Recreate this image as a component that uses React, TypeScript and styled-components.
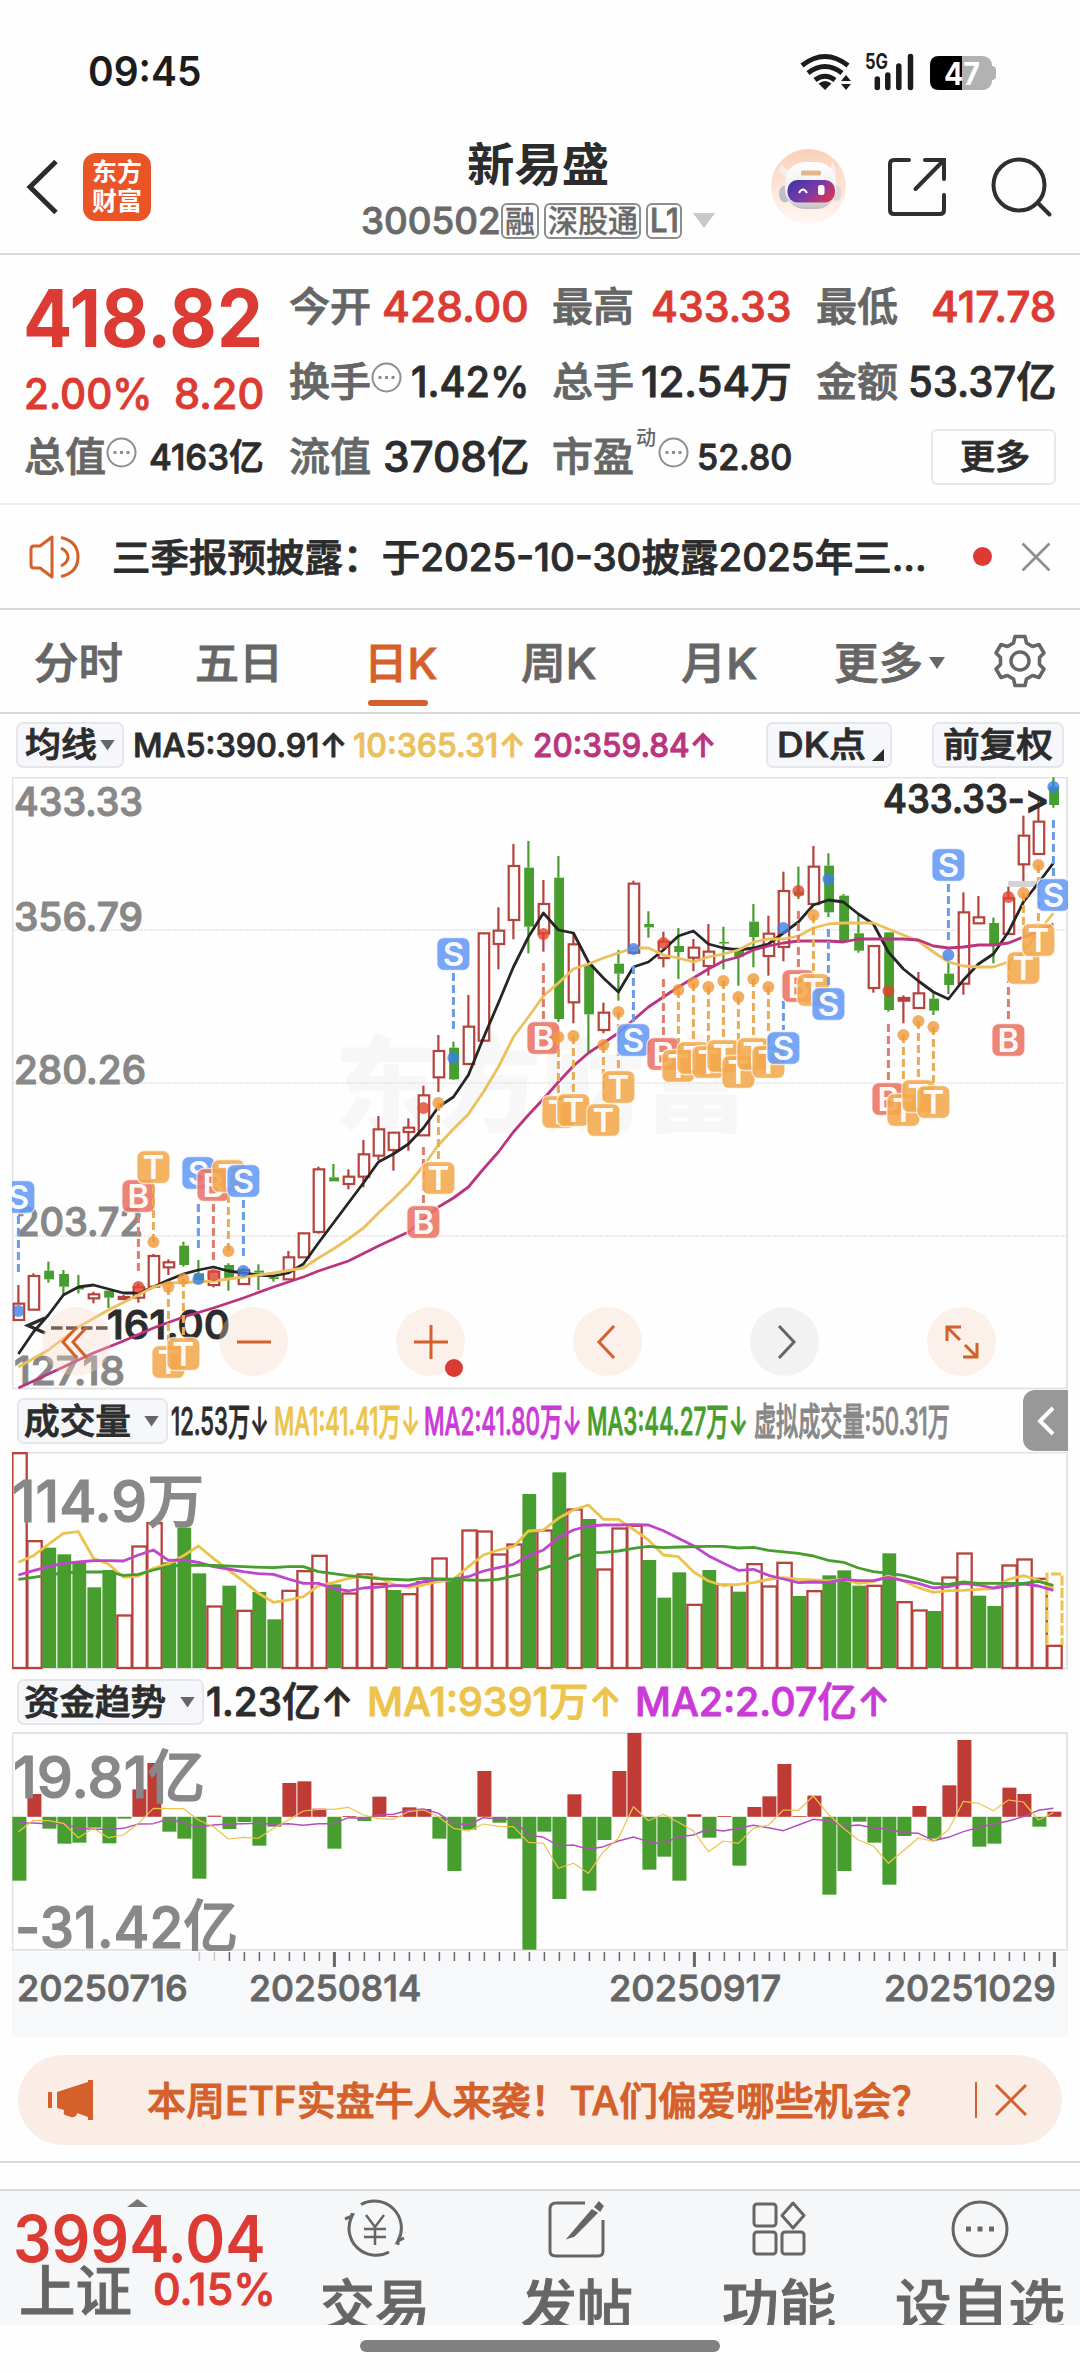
import React, { useLayoutEffect, useRef, useState } from "react";
import styled, { createGlobalStyle } from "styled-components";

const FONT = `Inter, "Noto Sans CJK SC", sans-serif`;
const RED = "#dc3b33";
const ORANGE = "#d4602b";
const CANDLE_RED = "#b5433c";
const CANDLE_GREEN = "#479d2d";
const YELLOW = "#ecc34b";
const PURPLE = "#c93ad6";

const GlobalStyle = createGlobalStyle`
  * { box-sizing: border-box; }
  body { margin: 0; background: #fefefe; }
`;

const Page = styled.div`
  width: 1080px;
  height: 2373px;
  display: flex;
  flex-direction: column;
  overflow: hidden;
  background: #fefefe;
  color: #2c2c2c;
  font-family: ${FONT};
  line-height: 1;
`;

/* ---------- auto-fit text ---------- */

interface TextStyle {
  $size: number;
  $weight?: number;
  $color?: string;
  $ml?: number;
}

const FitBox = styled.span<TextStyle & { $width: number }>`
  display: block;
  flex: none;
  width: ${(p) => p.$width}px;
  height: ${(p) => p.$size}px;
  margin-left: ${(p) => p.$ml ?? 0}px;
  font-size: ${(p) => p.$size}px;
  font-weight: ${(p) => p.$weight ?? 500};
  color: ${(p) => p.$color ?? "inherit"};
  -webkit-text-stroke: ${(p) => (p.$weight ? 0 : p.$size > 32 ? 0.9 : 0.3)}px currentColor;
  line-height: 1;
  white-space: nowrap;
`;

const FitInner = styled.span`
  display: inline-block;
  transform-origin: 0 50%;
`;

interface FitProps {
  children: string;
  width: number;
  size: number;
  weight?: number;
  color?: string;
  ml?: number;
}

// squeezes or stretches one line of text so it fills the given width
const Fit = ({ children, width, size, weight, color, ml }: FitProps) => {
  const ref = useRef<HTMLSpanElement>(null);
  const [scale, setScale] = useState(1);
  useLayoutEffect(() => {
    if (ref.current) setScale(width / ref.current.offsetWidth);
  }, [children, width]);
  return (
    <FitBox $width={width} $size={size} $weight={weight} $color={color} $ml={ml}>
      <FitInner ref={ref} style={{ transform: `scaleX(${scale})` }}>
        {children}
      </FitInner>
    </FitBox>
  );
};

const Triangle = styled.i<{ $w: number; $h: number; $color?: string; $up?: boolean; $ml?: number }>`
  flex: none;
  width: ${(p) => p.$w}px;
  height: ${(p) => p.$h}px;
  margin-left: ${(p) => p.$ml ?? 0}px;
  background: ${(p) => p.$color ?? "#666"};
  clip-path: ${(p) => (p.$up ? "polygon(50% 0, 100% 100%, 0 100%)" : "polygon(0 0, 100% 0, 50% 100%)")};
`;

/* ---------- status bar ---------- */

const StatusBar = styled.div`
  height: 120px;
  padding: 51px 84px 0 88px;
  display: flex;
  align-items: flex-start;
  justify-content: space-between;
  color: #1c1c1c;
`;

const StatusIcons = styled.div`
  display: flex;
  margin-top: 2px;
`;

const StatusIconsSvg = () => (
  <svg width="198" height="40" viewBox="798 53 198 40">
    <g fill="none" stroke="#1c1c1c" strokeWidth="5">
      <path d="M802 65.500 Q825 47.500 848 65.500" />
      <path d="M808 73 Q825 60 842 73" />
      <path d="M815 80 Q825 72.500 835 80" />
    </g>
    <path d="M825 90l-6.500-6.500q6.500-5 13 0z" fill="#1c1c1c" />
    <path d="M846 75l5 6h-10zM846 90l5-6h-10z" fill="#1c1c1c" />
    <text x="865" y="69" fontSize="21" fontWeight="700" fill="#1c1c1c" fontFamily={FONT} textLength="23" lengthAdjust="spacingAndGlyphs">5G</text>
    <path d="M877.300 79v8.500M887.800 75v12.500M898.800 66v21.500M910.500 56.500v31" stroke="#1c1c1c" strokeWidth="5.500" strokeLinecap="round" />
    <rect x="930" y="56" width="62" height="34" rx="9" fill="#b2b2b2" />
    <path d="M992 66q4 0 4 4v6q0 4-4 4z" fill="#b2b2b2" />
    <path d="M962 56v34h-23q-9 0-9-9v-16q0-9 9-9z" fill="#000" />
    <text x="944" y="84.500" fontSize="31" fontWeight="700" fill="#fff" fontFamily={FONT} textLength="36" lengthAdjust="spacingAndGlyphs">47</text>
  </svg>
);

/* ---------- header ---------- */

const Header = styled.header`
  height: 135px;
  display: grid;
  grid-template-columns: 361px 354px 1fr;
  border-bottom: 2px solid #dadada;
`;

const HeaderLeft = styled.div`
  display: flex;
  align-items: center;
  padding-left: 26px;
  gap: 24px;
`;

const Logo = styled.div`
  width: 68px;
  height: 68px;
  border-radius: 13px;
  background: #ea5528;
  color: #fff;
  display: flex;
  flex-direction: column;
  align-items: center;
  justify-content: center;
  gap: 4px;
  font-size: 25px;
  font-weight: 700;
`;

const HeaderTitle = styled.div`
  display: flex;
  flex-direction: column;
  align-items: center;
  padding-top: 21px;
`;

const SubTitle = styled.div`
  display: flex;
  align-items: center;
  width: 354px;
  height: 37px;
  margin-top: 15px;
  color: #6a6a6a;
`;

const Tag = styled.span<{ $w: number }>`
  width: ${(p) => p.$w}px;
  height: 36px;
  margin-right: 5px;
  display: flex;
  align-items: center;
  justify-content: center;
  border: 2px solid #8d8d8d;
  border-radius: 6px;
`;

const HeaderRight = styled.div`
  display: flex;
  align-items: center;
  padding-left: 56px;
`;

const Avatar = () => (
  <svg width="75" height="75" viewBox="0 0 75 75">
    <defs>
      <linearGradient id="halo" x1="0" y1="0" x2="0" y2="1">
        <stop offset="0" stopColor="#fbd0b8" />
        <stop offset="1" stopColor="#fff8f4" />
      </linearGradient>
      <linearGradient id="visor" x1="0" y1="0" x2="1" y2="0.6">
        <stop offset="0" stopColor="#3a32a5" />
        <stop offset="0.6" stopColor="#7a3ba8" />
        <stop offset="1" stopColor="#d0365a" />
      </linearGradient>
      <linearGradient id="helmet" x1="0" y1="0" x2="0" y2="1">
        <stop offset="0" stopColor="#fff" />
        <stop offset="0.7" stopColor="#ececee" />
        <stop offset="1" stopColor="#bdbdc4" />
      </linearGradient>
    </defs>
    <circle cx="37.500" cy="37.500" r="37.500" fill="url(#halo)" />
    <path d="M18 28q-9-1-10-7 1-4 3-6 1 6 10 6zM58 25l3-12q4 5 4 12l-2 6z" fill="#f3eeee" />
    <ellipse cx="14" cy="45" rx="6" ry="8.500" fill="#bfbfc8" />
    <ellipse cx="66" cy="44" rx="4.500" ry="8" fill="#dcd8de" />
    <rect x="14" y="13" width="51" height="47" rx="20" fill="url(#helmet)" />
    <rect x="30" y="21.500" width="20" height="5" rx="1.500" fill="#e3b58d" />
    <rect x="16.500" y="31" width="47.500" height="22.500" rx="10" fill="url(#visor)" />
    <path d="M28 44q4-7 8 0" fill="none" stroke="#fff" strokeWidth="2" />
    <rect x="47" y="36" width="6.500" height="10" rx="2.500" fill="#fff" />
  </svg>
);

const HeaderIcon = styled.svg<{ $ml: number }>`
  flex: none;
  margin-left: ${(p) => p.$ml}px;
  fill: none;
  stroke: #2f2f2f;
  stroke-width: 4;
  stroke-linecap: round;
`;

/* ---------- quote ---------- */

const Quote = styled.section`
  height: 250px;
  padding: 14px 23px 11px 23px;
  display: grid;
  grid-template-columns: 265px 263px 264px 1fr;
  grid-template-rows: 75px 75px 75px;
  border-bottom: 2px solid #ebedee;
`;

const PriceBlock = styled.div`
  grid-row: span 2;
  padding-top: 9px;
`;

const ChangeRow = styled.div`
  display: flex;
  margin-top: 15px;
`;

const Cell = styled.div<{ $w: number }>`
  width: ${(p) => p.$w}px;
  display: flex;
  align-items: center;
  justify-content: space-between;
`;

const LabelGroup = styled.div`
  display: flex;
  align-items: center;
  color: #666;
`;

const Sup = styled.span`
  width: 22px;
  margin: -38px 0 0 2px;
  font-size: 20px;
  font-weight: 500;
`;

const MoreButton = styled.button`
  width: 125px;
  height: 56px;
  margin-left: 116px;
  align-self: center;
  display: flex;
  align-items: center;
  justify-content: center;
  border: 2px solid #e6e8ea;
  border-radius: 6px;
  background: #fefefe;
  color: #2c2c2c;
  font-family: inherit;
  padding: 0;
`;

const DotsSvg = styled.svg`
  margin-top: -8px;
  fill: none;
  stroke: #8e8e8e;
`;

const InfoDots = () => (
  <DotsSvg width="31" height="31" viewBox="0 0 31 31">
    <circle cx="15.500" cy="15.500" r="14" strokeWidth="2" />
    <path d="M7.500 15.500h3M14 15.500h3M20.500 15.500h3" strokeWidth="3" />
  </DotsSvg>
);

interface StatProps {
  label: string;
  value: string;
  valueWidth: number;
  info?: boolean;
  sup?: string;
  color?: string;
  small?: boolean;
}

const Stat = ({ label, value, valueWidth, info, sup, color, small }: StatProps) => (
  <Cell $w={241}>
    <LabelGroup>
      <Fit width={82} size={40} color="#666" ml={1}>{label}</Fit>
      {sup && <Sup>{sup}</Sup>}
      {info && <InfoDots />}
    </LabelGroup>
    <Fit width={valueWidth} size={small ? 36 : 42} color={color}>{value}</Fit>
  </Cell>
);

/* ---------- news ---------- */

const News = styled.section`
  height: 105px;
  padding-left: 28px;
  display: flex;
  align-items: center;
  border-bottom: 2px solid #d8d8d8;
`;

const RedDot = styled.i`
  width: 19px;
  height: 19px;
  margin: 0 28px 0 46px;
  border-radius: 50%;
  background: ${RED};
`;

/* ---------- tabs ---------- */

const Tabs = styled.nav`
  height: 104px;
  display: flex;
  align-items: center;
  border-bottom: 2px solid #d8d8d8;
  color: #666;
`;

const Tab = styled.div<{ $ml: number; $active?: boolean }>`
  height: 102px;
  margin-left: ${(p) => p.$ml}px;
  display: flex;
  align-items: center;
  padding-top: 4px;
  position: relative;
  color: ${(p) => (p.$active ? ORANGE : "#666")};

  &::after {
    content: "";
    display: ${(p) => (p.$active ? "block" : "none")};
    position: absolute;
    left: 4px;
    bottom: 6px;
    width: 60px;
    height: 6px;
    border-radius: 3px;
    background: ${ORANGE};
  }
`;

const GearSvg = styled.svg`
  margin-left: 48px;
  fill: none;
  stroke: #666;
  stroke-width: 3.5;
  stroke-linejoin: round;
`;

/* ---------- indicator bars ---------- */

const IndicatorBar = styled.div<{ $h: number; $pad: number }>`
  height: ${(p) => p.$h}px;
  padding: ${(p) => p.$pad}px 12px 0 16px;
  display: flex;
  align-items: flex-start;
`;

const BarTexts = styled.div`
  height: 46px;
  display: flex;
  align-items: center;
`;

const Chip = styled.div<{ $w: number; $ml?: number }>`
  position: relative;
  flex: none;
  width: ${(p) => p.$w}px;
  height: 46px;
  margin-left: ${(p) => p.$ml ?? 0}px;
  display: flex;
  align-items: center;
  padding-left: 5px;
  background: #f6f7fa;
  border: 2px solid #e4e6ea;
  border-radius: 7px;
`;

const Corner = styled.i`
  position: absolute;
  right: 6px;
  bottom: 5px;
  width: 12px;
  height: 12px;
  background: #2c2c2c;
  clip-path: polygon(100% 0, 100% 100%, 0 100%);
`;

const SideHandle = styled.div`
  width: 45px;
  height: 61px;
  margin: -8px 0 0 auto;
  border-radius: 12px 0 0 12px;
  background: #989898;
  display: flex;
  align-items: center;
  justify-content: center;
`;

/* ---------- charts ---------- */

const ChartWrap = styled.div`
  position: relative;
  width: 1056px;
  margin-left: 12px;

  svg {
    display: block;
  }
`;

const ChartTools = styled.div`
  position: absolute;
  left: 30px;
  right: 38px;
  bottom: 14px;
  display: flex;
  gap: 109px;
`;

const ToolButton = styled.button<{ $muted?: boolean }>`
  position: relative;
  width: 69px;
  height: 69px;
  margin-right: -1px;
  flex: none;
  padding: 0;
  border: 0;
  border-radius: 50%;
  background: ${(p) => (p.$muted ? "rgba(225, 225, 225, 0.4)" : "rgba(245, 215, 195, 0.33)")};
  color: ${(p) => (p.$muted ? "#666" : ORANGE)};
  display: flex;
  align-items: center;
  justify-content: center;

  svg {
    fill: none;
    stroke: currentColor;
    stroke-width: 3;
  }
`;

const ToolDot = styled.i`
  position: absolute;
  left: 49px;
  top: 52px;
  width: 18px;
  height: 18px;
  border-radius: 50%;
  background: ${RED};
`;

const barX = (i: number) => 18.4 + 15 * i;

// [index, value] pairs, y in thirds of a pixel
type Series = number[][];

const toPoints = (series: Series, base: number) =>
  series.map(([i, v]) => `${barX(i)},${(base + v / 3).toFixed(1)}`).join(" ");

const dense = (values: number[]): Series => values.map((v, i) => [i, v]);

// direction, high, body top, body bottom, low
const candles: [string, number, number, number, number][] = [
  ["r", 1545, 1601, 1650, 1650], ["r", 1510, 1518, 1619, 1619], ["g", 1475, 1502, 1528, 1538], ["g", 1500, 1512, 1550, 1572],
  ["g", 1515, 1554, 1558, 1570], ["r", 1565, 1573, 1585, 1600], ["g", 1562, 1562, 1583, 1614], ["r", 1575, 1581, 1587, 1588],
  ["r", 1540, 1552, 1583, 1598], ["r", 1452, 1458, 1550, 1550], ["r", 1468, 1477, 1492, 1515], ["g", 1415, 1427, 1485, 1490],
  ["g", 1470, 1510, 1530, 1542], ["r", 1505, 1505, 1545, 1552], ["g", 1480, 1485, 1527, 1562], ["r", 1495, 1500, 1542, 1542],
  ["g", 1483, 1502, 1508, 1560], ["g", 1518, 1522, 1527, 1535], ["r", 1443, 1462, 1528, 1528], ["r", 1388, 1390, 1462, 1462],
  ["r", 1190, 1198, 1386, 1391], ["g", 1182, 1222, 1234, 1234], ["r", 1198, 1220, 1242, 1258], ["r", 1110, 1153, 1220, 1252],
  ["r", 1038, 1078, 1157, 1170], ["r", 1088, 1088, 1140, 1202], ["r", 1045, 1073, 1086, 1142], ["r", 947, 976, 1096, 1096],
  ["r", 795, 843, 922, 966], ["g", 815, 833, 928, 930], ["r", 675, 770, 882, 882], ["r", 488, 490, 812, 812],
  ["r", 412, 482, 522, 598], ["r", 222, 288, 450, 508], ["g", 213, 293, 470, 550], ["r", 330, 402, 490, 545],
  ["g", 258, 323, 747, 755], ["r", 490, 523, 697, 760], ["g", 580, 585, 733, 850], ["r", 698, 728, 780, 790],
  ["g", 540, 581, 611, 692], ["r", 332, 341, 548, 548], ["g", 424, 462, 472, 503], ["r", 485, 515, 564, 592],
  ["g", 474, 528, 546, 627], ["r", 507, 533, 563, 604], ["r", 462, 545, 588, 617], ["g", 470, 516, 520, 598],
  ["g", 533, 533, 560, 647], ["g", 402, 455, 501, 592], ["r", 437, 491, 558, 617], ["r", 305, 363, 531, 574],
  ["g", 290, 365, 376, 387], ["r", 228, 290, 402, 402], ["g", 250, 287, 427, 441], ["g", 372, 377, 514, 514],
  ["g", 430, 490, 542, 548], ["r", 528, 528, 654, 668], ["g", 487, 487, 720, 725], ["r", 676, 684, 692, 760],
  ["r", 606, 670, 714, 714], ["g", 665, 686, 722, 735], ["g", 575, 611, 645, 672], ["r", 367, 427, 641, 674],
  ["r", 378, 442, 460, 460], ["g", 443, 459, 523, 580], ["r", 350, 385, 492, 492], ["r", 137, 197, 283, 335],
  ["r", 80, 155, 252, 252], ["g", 22, 50, 105, 113],
];

const ma5 = [
  1354, 1332, 1315, 1295, 1287, 1285, 1289, 1293, 1293, 1287, 1280, 1274, 1270, 1267, 1271, 1273, 1275, 1276, 1273, 1264, 1243, 1223,
  1203, 1183, 1162, 1154, 1144, 1128, 1107, 1097, 1075, 1038, 1003, 967, 937, 913, 930, 933, 962, 978, 992, 967, 962, 950, 936, 931, 944,
  948, 950, 948, 944, 933, 922, 905, 900, 902, 914, 924, 952, 969, 981, 992, 999, 980, 964, 954, 932, 902, 883, 863,
].map((y, i) => [i, y * 3]);

const ma10 = [
  [0, 1367], [2, 1350], [4, 1327], [6, 1310], [8, 1295], [9, 1287], [10, 1283], [12, 1282], [13, 1281], [15, 1277], [17, 1273], [19, 1268],
  [20, 1258], [21, 1249], [22, 1239], [23, 1228], [24, 1213], [25, 1199], [26, 1184], [27, 1166], [28, 1145], [29, 1129], [30, 1114],
  [31, 1092], [32, 1067], [33, 1037], [34, 1017], [35, 996], [36, 983], [37, 969], [38, 964], [39, 958], [40, 953], [41, 948], [42, 948],
  [43, 955], [44, 958], [45, 962], [46, 957], [47, 954], [48, 950], [49, 942], [50, 939], [51, 939], [52, 936], [53, 928], [54, 924],
  [55, 923], [57, 923], [58, 929], [59, 935], [60, 941], [61, 952], [62, 962], [63, 966], [64, 967], [65, 967], [66, 962], [67, 952],
  [68, 932], [69, 913],
].map(([i, y]) => [i, y * 3]);

const ma20 = [
  [0, 1388], [3, 1367], [5, 1353], [7, 1341], [9, 1328], [11, 1317], [13, 1308], [15, 1298], [17, 1287], [19, 1277], [20, 1271], [22, 1261],
  [24, 1246], [26, 1232], [28, 1207], [29, 1198], [30, 1187], [31, 1169], [32, 1152], [33, 1132], [34, 1115], [35, 1099], [36, 1082],
  [37, 1066], [38, 1053], [39, 1043], [40, 1033], [41, 1020], [42, 1007], [43, 997], [44, 987], [45, 978], [46, 969], [47, 961], [48, 957],
  [49, 950], [50, 946], [51, 943], [52, 941], [54, 941], [55, 942], [56, 939], [59, 939], [60, 940], [61, 946], [62, 948], [63, 947],
  [64, 945], [65, 945], [66, 943], [67, 937], [68, 932], [69, 924],
].map(([i, y]) => [i, y * 3]);

// kind, bar index, badge centre y, dot y, line start, line end
const markers: [string, number, number, number, number, number][] = [
  ["S", 0, 1197, 1311, 1216, 1272], ["B", 8, 1196, 1287, 1215, 1271], ["T", 9, 1167, 1242, 1186, 1242], ["T", 10, 1362, 1287, 1287, 1345],
  ["T", 11, 1354, 1279, 1279, 1337], ["S", 12, 1173, 1279, 1204, 1248], ["B", 13, 1185, 1275, 1204, 1260], ["T", 14, 1176, 1251, 1195, 1251],
  ["S", 15, 1181, 1271, 1200, 1256], ["B", 27, 1222, 1108, 1147, 1204], ["T", 28, 1178, 1103, 1103, 1160], ["S", 29, 954, 1058, 973, 1029],
  ["B", 35, 1038, 934, 963, 1020], ["T", 36, 1112, 1037, 1037, 1095], ["T", 37, 1110, 1036, 1036, 1093], ["T", 39, 1120, 1045, 1045, 1103],
  ["T", 40, 1087, 1012, 1012, 1070], ["S", 41, 1040, 949, 966, 1022], ["B", 43, 1054, 943, 979, 1036], ["T", 44, 1066, 990, 990, 1048],
  ["T", 45, 1058, 983, 983, 1040], ["T", 46, 1062, 987, 987, 1044], ["T", 47, 1056, 981, 981, 1038], ["T", 48, 1072, 997, 997, 1055],
  ["T", 49, 1054, 979, 979, 1036], ["T", 50, 1062, 987, 987, 1044], ["S", 51, 1048, 928, 1001, 1030], ["B", 52, 986, 891, 911, 968],
  ["T", 53, 990, 915, 915, 972], ["S", 54, 1004, 879, 929, 986], ["B", 58, 1099, 991, 1024, 1081], ["T", 59, 1110, 1035, 1035, 1092],
  ["T", 60, 1096, 1021, 1021, 1078], ["T", 61, 1102, 1027, 1027, 1084], ["S", 62, 865, 955, 884, 941], ["B", 66, 1040, 897, 963, 1022],
  ["T", 67, 968, 893, 893, 950], ["T", 68, 940, 865, 865, 922], ["S", 69, 895, 787, 820, 877],
];

const badgeColors: Record<string, { fill: string; line: string; dot: string }> = {
  S: { fill: "#659af6", line: "#6a9be8", dot: "#3d7fe6" },
  B: { fill: "#ea7464", line: "#e07c6c", dot: "#e0452e" },
  T: { fill: "#f2a94c", line: "#e8ab57", dot: "#f0993a" },
};

const Badge = ({ kind, x, y }: { kind: string; x: number; y: number }) => (
  <g>
    <rect x={x - 16.5} y={y - 16.5} width="33" height="33" rx="7" fill={badgeColors[kind].fill} fillOpacity="0.88" stroke="#fff" strokeOpacity="0.7" strokeWidth="1.300" />
    <text x={x} y={y + 12} textAnchor="middle" fontSize="33" fontWeight="600" fill="#fff" fillOpacity="0.95" fontFamily={FONT}>{kind}</text>
  </g>
);

const ChartLabel = styled.text<{ $size: number; $color: string }>`
  font-family: ${FONT};
  font-size: ${(p) => p.$size}px;
  font-weight: 500;
  font-feature-settings: "calt" 0;
  fill: ${(p) => p.$color};
  stroke: ${(p) => p.$color};
  stroke-width: 1.2px;
`;

const AxisText = ({ x, y, w, size, children, color = "#888" }: { x: number; y: number; w: number; size: number; children: string; color?: string }) => (
  <ChartLabel x={x} y={y} $size={size} $color={color} textLength={w} lengthAdjust="spacingAndGlyphs">{children}</ChartLabel>
);

const PriceChart = () => (
  <svg width="1056" height="613" viewBox="12 777 1056 613">
    <text x="334" y="1124" fontSize="104" fontWeight="900" fill="#f7f7f7" fontFamily={FONT} textLength="414" lengthAdjust="spacingAndGlyphs">东方财富</text>
    <rect x="12.500" y="777.500" width="1054.500" height="611" fill="none" stroke="#e2e2e2" strokeWidth="1.800" />
    {[930, 1083, 1236].map((y) => (
      <line key={y} x1="12" x2="1068" y1={y} y2={y} stroke="#e3e3e3" strokeWidth="1.500" strokeDasharray="2 1" />
    ))}
    {candles.map(([dir, high, top, bottom, low], i) => {
      const x = barX(i);
      const y = (v: number) => 770 + v / 3;
      const flat = bottom - top < 12;
      const color = dir === "r" ? CANDLE_RED : CANDLE_GREEN;
      return (
        <g key={i} stroke={color} fill={color} strokeWidth="2.200">
          <line x1={x} x2={x} y1={y(high)} y2={y(top)} />
          <line x1={x} x2={x} y1={y(bottom)} y2={y(low)} />
          {dir === "r" ? (
            <rect x={x - 4.700} y={y(top)} width="10.500" height={y(bottom) - y(top)} fill={flat ? color : "#fefefe"} />
          ) : (
            <rect x={x - 4.200} y={y(top)} width="9.800" height={Math.max(1.5, y(bottom) - y(top))} stroke="none" />
          )}
        </g>
      );
    })}
    <rect x="1008" y="881" width="29" height="6" fill="#d4d4d8" />
    <AxisText x={14} y={816} w={129} size={40}>433.33</AxisText>
    <AxisText x={14} y={931} w={129} size={40}>356.79</AxisText>
    <AxisText x={14} y={1084} w={132} size={40}>280.26</AxisText>
    <AxisText x={16} y={1236} w={127} size={40}>203.72</AxisText>
    <AxisText x={14} y={1385} w={111} size={40}>127.18</AxisText>
    <AxisText x={883} y={813} w={166} size={40} color="#2c2c2c">{"433.33->"}</AxisText>
    <AxisText x={107} y={1339} w={123} size={40} color="#2c2c2c">161.00</AxisText>
    <path d="M45 1318l-17 7.500 17 7.500" fill="none" stroke="#2c2c2c" strokeWidth="3.500" />
    <path d="M51 1328h58" stroke="#2c2c2c" strokeWidth="3.500" strokeDasharray="11.500 3.500" />
    <g fill="none" strokeWidth="2.800" strokeLinejoin="round">
      <polyline points={toPoints(ma5, 0)} stroke="#262626" />
      <polyline points={toPoints(ma10, 0)} stroke="#ecc05c" />
      <polyline points={toPoints(ma20, 0)} stroke="#bb347e" />
    </g>
    {markers.map(([kind, i, badgeY, dotY, from, to]) => (
      <g key={i}>
        <line x1={barX(i)} x2={barX(i)} y1={from} y2={to} stroke={badgeColors[kind].line} strokeWidth="3" strokeDasharray="8 4" />
        <circle cx={barX(i)} cy={dotY} r="6" fill={badgeColors[kind].dot} fillOpacity="0.8" />
        <Badge kind={kind} x={barX(i)} y={badgeY} />
      </g>
    ))}
  </svg>
);

const volumes: [string, number][] = (
  "r188 r452 g473 g493 g517 g592 g540 r675 r468 r398 g517 g413 g550 r648 g587 r661 g606 g688 r601 r542 r496 g583 r609 r552 r580 g600 r611 " +
  "r575 r504 g570 r420 r423 r492 r462 g312 r420 g247 r357 g387 r537 r414 r406 g510 g623 g547 r643 g540 r583 g605 r521 r588 r517 g618 r602 " +
  "g556 g541 g587 r586 g490 r635 r660 g663 r561 r489 g617 g648 r525 r507 r565 r766"
).split(" ").map((s) => [s[0], Number(s.slice(1))]);

const volMa1 = dense([
  517, 497, 463, 430, 425, 505, 522, 562, 558, 535, 522, 497, 468, 505, 540, 573, 610, 637, 630, 620, 587, 578, 565, 558, 563, 583, 592, 585,
  575, 568, 530, 495, 480, 470, 423, 420, 385, 360, 345, 388, 388, 418, 450, 495, 500, 545, 573, 587, 583, 578, 568, 563, 568, 570, 573, 568,
  580, 575, 557, 573, 593, 607, 602, 601, 598, 596, 568, 557, 570, 595,
]);
const volMa2 = dense([
  555, 542, 530, 520, 516, 512, 512, 513, 495, 480, 511, 510, 517, 530, 537, 545, 551, 553, 567, 580, 580, 595, 603, 594, 591, 587, 587, 575,
  568, 567, 560, 543, 533, 523, 497, 480, 443, 420, 408, 405, 405, 404, 405, 422, 445, 467, 497, 520, 541, 538, 556, 567, 578, 576, 577, 568,
  572, 572, 562, 572, 580, 594, 590, 580, 585, 594, 588, 582, 588, 601,
]);
const volMa3: Series = [
  [0, 568], [1, 562], [2, 555], [3, 549], [4, 546], [6, 546], [7, 556], [8, 553], [9, 540], [10, 530], [11, 525], [13, 526], [15, 530],
  [17, 533], [18, 530], [19, 530], [20, 545], [22, 557], [24, 566], [26, 570], [27, 565], [30, 570], [31, 571], [32, 568], [33, 558],
  [34, 548], [35, 535], [36, 520], [37, 500], [38, 488], [39, 487], [40, 483], [41, 475], [42, 469], [43, 473], [44, 471], [46, 469],
  [47, 469], [48, 474], [49, 472], [50, 481], [52, 490], [53, 498], [54, 511], [55, 517], [56, 534], [57, 545], [58, 550], [59, 556],
  [60, 568], [61, 580], [62, 583], [63, 576], [64, 580], [67, 580], [68, 574], [69, 586],
];

const VolumeChart = () => (
  <svg width="1056" height="218" viewBox="12 1452 1056 218">
    <rect x="12.500" y="1452.500" width="1054.500" height="216" fill="none" stroke="#e2e2e2" strokeWidth="1.800" />
    {volumes.map(([dir, v], i) => {
      const top = 1390 + v / 3;
      return dir === "g" ? (
        <rect key={i} x={barX(i) - 6} y={top} width="13.800" height={1668 - top} fill={CANDLE_GREEN} />
      ) : (
        <rect key={i} x={barX(i) - 6} y={top + 0.5} width="14.300" height={1667.5 - top} fill="#fefefe" stroke={CANDLE_RED} strokeWidth="2.300" />
      );
    })}
    <path d="M1047 1645v-71h15v71" fill="none" stroke={YELLOW} strokeWidth="3" strokeDasharray="10 2.500" />
    <AxisText x={12} y={1522} w={192} size={58}>114.9万</AxisText>
    <g fill="none" strokeWidth="2.800" strokeLinejoin="round">
      <polyline points={toPoints(volMa1, 1390)} stroke={YELLOW} />
      <polyline points={toPoints(volMa2, 1390)} stroke="#bf45cb" />
      <polyline points={toPoints(volMa3, 1390)} stroke={CANDLE_GREEN} />
    </g>
  </svg>
);

const flows = [
  482, 222, 326, 371, 368, 323, 370, 296, 208, 129, 335, 356, 476, 287, 327, 306, 377, 320, 189, 184, 266, 386, 288, 303, 230, 288, 262, 267,
  356, 453, 329, 153, 308, 356, 689, 335, 537, 223, 512, 360, 153, 39, 449, 410, 482, 283, 353, 288, 437, 261, 229, 132, 288, 227, 524, 453,
  305, 368, 494, 348, 258, 356, 196, 60, 380, 371, 203, 222, 320, 275,
];
const flowMa1 = dense([
  335, 301, 302, 310, 353, 325, 353, 345, 310, 265, 266, 266, 300, 320, 357, 352, 355, 325, 300, 273, 268, 268, 262, 285, 296, 298, 275, 270,
  290, 325, 333, 312, 319, 320, 367, 370, 445, 430, 460, 395, 355, 260, 302, 283, 307, 333, 395, 363, 370, 325, 315, 270, 271, 228, 283, 325,
  360, 378, 430, 392, 354, 364, 330, 244, 250, 272, 240, 246, 300, 278,
]);
const flowMa2 = dense([
  309, 309, 312, 310, 325, 328, 328, 325, 312, 311, 297, 308, 322, 315, 312, 311, 310, 313, 311, 316, 311, 311, 293, 295, 285, 283, 271, 267,
  280, 310, 315, 293, 296, 299, 345, 352, 377, 375, 388, 380, 363, 351, 365, 371, 350, 345, 327, 333, 325, 316, 323, 332, 315, 298, 302, 319,
  315, 323, 328, 338, 340, 362, 352, 335, 322, 313, 303, 290, 271, 265,
]);

const FlowChart = () => (
  <svg width="1056" height="219" viewBox="12 1732 1056 219">
    <rect x="12.500" y="1733" width="1054.500" height="217" fill="none" stroke="#e2e2e2" strokeWidth="1.800" />
    {flows.map((v, i) => {
      const zero = 1816.8;
      const y = 1720 + v / 3;
      return (
        <rect
          key={i}
          x={barX(i) - 6}
          y={Math.min(y, zero)}
          width="14"
          height={Math.abs(y - zero)}
          fill={v < 290 ? "#bf3b35" : CANDLE_GREEN}
        />
      );
    })}
    <AxisText x={13} y={1798} w={192} size={58}>19.81亿</AxisText>
    <AxisText x={15} y={1948} w={223} size={58}>-31.42亿</AxisText>
    <g fill="none" strokeLinejoin="round">
      <polyline points={toPoints(flowMa2, 1720)} stroke="#b24fbc" strokeWidth="1.400" />
      <polyline points={toPoints(flowMa1, 1720)} stroke={YELLOW} strokeWidth="1.200" />
    </g>
  </svg>
);

const Axis = styled.div`
  width: 1056px;
  height: 85px;
  margin: 1px 0 0 12px;
  background: #f7f8fa;
`;

const AxisDates = styled.div`
  display: flex;
  padding: 2px 0 0 5px;
`;

const MAJOR_TICKS = [9, 33, 57];

const AxisTicks = () => (
  <svg width="1056" height="16" viewBox="12 1953 1056 16" display="block">
    {Array.from({ length: 58 }, (_, k) => {
      const x = 199.4 + 15 * k;
      const major = MAJOR_TICKS.includes(k);
      return (
        <line key={k} x1={x} x2={x} y1="1953" y2={major ? 1968 : 1962} stroke={k < 2 ? "#c8c8c8" : "#666"} strokeWidth={major ? 3 : 1.5} />
      );
    })}
  </svg>
);

/* ---------- banner ---------- */

const Banner = styled.div`
  flex: none;
  width: 1044px;
  height: 90px;
  margin: 18px 0 0 18px;
  padding-left: 30px;
  border-radius: 45px;
  background: #faede5;
  display: flex;
  align-items: center;
`;

const BannerDivider = styled.i`
  width: 1.5px;
  height: 36px;
  margin: 0 17px 0 44px;
  background: ${ORANGE};
`;

const Spacer = styled.div`
  height: 28px;
  margin-top: 16px;
  border-top: 2px solid #dadada;
`;

/* ---------- bottom nav ---------- */

const BottomNav = styled.footer`
  height: 136px;
  display: grid;
  grid-template-columns: 274px 202px 202px 202px 200px;
  overflow: hidden;
  border-top: 2px solid #d9dadc;
  background: #f6f7f9;
`;

const IndexBox = styled.div`
  display: flex;
  flex-direction: column;
  padding: 8px 0 0 13px;
`;

const IndexRow = styled.div`
  display: flex;
  align-items: flex-start;
  margin-top: -7px;
`;

const IndexChange = styled.div`
  padding-top: 3px;
`;

const NavItem = styled.div`
  display: flex;
  flex-direction: column;
  align-items: center;
  padding-top: 8px;
  gap: 19px;

  svg {
    flex: none;
    fill: none;
    stroke: #666;
    stroke-width: 3;
  }
`;

const HomeIndicator = styled.div`
  width: 360px;
  height: 12px;
  margin: 15px auto 0;
  border-radius: 6px;
  background: #808080;
`;

const App = () => (
  <Page>
    <GlobalStyle />
    <StatusBar>
      <Fit width={113} size={41} weight={600}>09:45</Fit>
      <StatusIcons>
        <StatusIconsSvg />
      </StatusIcons>
    </StatusBar>

    <Header>
      <HeaderLeft>
        <svg width="33" height="56" viewBox="0 0 33 56">
          <path d="M30 2.500L4 28l26 25.500" fill="none" stroke="#2b2b2b" strokeWidth="5" />
        </svg>
        <Logo>
          <span>东方</span>
          <span>财富</span>
        </Logo>
      </HeaderLeft>
      <HeaderTitle>
        <Fit width={142} size={46} weight={600}>新易盛</Fit>
        <SubTitle>
          <Fit width={140} size={37}>300502</Fit>
          <Tag $w={38}>
            <Fit width={30} size={30}>融</Fit>
          </Tag>
          <Tag $w={97}>
            <Fit width={90} size={31}>深股通</Fit>
          </Tag>
          <Tag $w={36}>
            <Fit width={29} size={33}>L1</Fit>
          </Tag>
          <Triangle $w={22} $h={15} $color="#c9c9c9" $ml={6} />
        </SubTitle>
      </HeaderTitle>
      <HeaderRight>
        <Avatar />
        <HeaderIcon $ml={41} width="60" height="60" viewBox="0 0 60 60">
          <path d="M22 3H7q-4 0-4 4v46q0 4 4 4h46q4 0 4-4V38" />
          <path d="M38 3h19v19M57 3L28.500 32" />
        </HeaderIcon>
        <HeaderIcon $ml={44} width="62" height="62" viewBox="0 0 62 62">
          <circle cx="28" cy="29" r="25.500" />
          <path d="M47 47l11.500 11.500" />
        </HeaderIcon>
      </HeaderRight>
    </Header>

    <Quote>
      <PriceBlock>
        <Fit width={240} size={80} weight={700} color={RED}>418.82</Fit>
        <ChangeRow>
          <Fit width={128} size={42} color={RED} ml={1}>2.00%</Fit>
          <Fit width={90} size={42} color={RED} ml={22}>8.20</Fit>
        </ChangeRow>
      </PriceBlock>
      <Stat label="今开" value="428.00" valueWidth={147} color={RED} />
      <Stat label="最高" value="433.33" valueWidth={141} color={RED} />
      <Stat label="最低" value="417.78" valueWidth={125} color={RED} />
      <Stat label="换手" info value="1.42%" valueWidth={118} />
      <Stat label="总手" value="12.54万" valueWidth={151} />
      <Stat label="金额" value="53.37亿" valueWidth={148} />
      <Stat label="总值" info value="4163亿" valueWidth={115} small />
      <Stat label="流值" value="3708亿" valueWidth={146} />
      <Stat label="市盈" sup="动" info value="52.80" valueWidth={95} small />
      <MoreButton>
        <Fit width={70} size={34}>更多</Fit>
      </MoreButton>
    </Quote>

    <News>
      <svg width="54" height="46" viewBox="0 0 54 46" fill="none" stroke={ORANGE} strokeWidth="3">
        <path d="M24 3L12 12H6q-3 0-3 3v16q0 3 3 3h6l12 9z" strokeLinejoin="round" />
        <path d="M33 14q7 3.500 7 9t-7 9" />
        <path d="M33 3.500q17 4 17 19.500T33 42.500" />
      </svg>
      <Fit width={815} size={38} ml={30}>三季报预披露：于2025-10-30披露2025年三...</Fit>
      <RedDot />
      <svg width="32" height="32" viewBox="0 0 32 32">
        <path d="M2.500 2.500l27 27M29.500 2.500l-27 27" stroke="#909090" strokeWidth="2.800" />
      </svg>
    </News>

    <Tabs>
      <Tab $ml={34}><Fit width={89} size={43}>分时</Fit></Tab>
      <Tab $ml={72}><Fit width={88} size={43}>五日</Fit></Tab>
      <Tab $ml={81} $active><Fit width={74} size={43}>日K</Fit></Tab>
      <Tab $ml={83}><Fit width={76} size={43}>周K</Fit></Tab>
      <Tab $ml={84}><Fit width={77} size={43}>月K</Fit></Tab>
      <Tab $ml={76}>
        <Fit width={89} size={43}>更多</Fit>
        <Triangle $w={16} $h={12} $ml={6} />
      </Tab>
      <GearSvg width="54" height="54" viewBox="0 0 54 54">
        <path d="M22 2.500h10l1.500 6.500 6 3.500 6.500-2 5 8.500-4.500 4.500v7l4.500 4.500-5 8.500-6.500-2-6 3.500-1.500 6.500H22l-1.500-6.500-6-3.500-6.500 2-5-8.500L7.500 30.500v-7L3 19l5-8.500 6.500 2 6-3.500z" />
        <circle cx="27" cy="27" r="9" />
      </GearSvg>
    </Tabs>

    <IndicatorBar $h={63} $pad={8}>
      <Chip $w={108}>
        <Fit width={72} size={34} ml={2}>均线</Fit>
        <Triangle $w={15} $h={11} $ml={3} />
      </Chip>
      <BarTexts>
        <Fit width={214} size={33} ml={9}>MA5:390.91↑</Fit>
        <Fit width={173} size={33} color="#ecc05c" ml={6}>10:365.31↑</Fit>
        <Fit width={184} size={33} color="#bb347e" ml={7}>20:359.84↑</Fit>
      </BarTexts>
      <Chip $w={126} $ml={49}>
        <Fit width={89} size={34} ml={4}>DK点</Fit>
        <Corner />
      </Chip>
      <Chip $w={132} $ml={40}>
        <Fit width={110} size={34} ml={4}>前复权</Fit>
      </Chip>
    </IndicatorBar>

    <ChartWrap>
      <PriceChart />
      <ChartTools>
        <ToolButton>
          <svg width="68" height="68" viewBox="0 0 68 68"><path d="M44 19L30 34l14 16M34 19L20 34l14 16" /></svg>
        </ToolButton>
        <ToolButton>
          <svg width="34" height="34" viewBox="0 0 34 34"><path d="M0 17h34" /></svg>
        </ToolButton>
        <ToolButton>
          <svg width="34" height="34" viewBox="0 0 34 34"><path d="M0 17h34M17 0v34" /></svg>
          <ToolDot />
        </ToolButton>
        <ToolButton>
          <svg width="34" height="34" viewBox="0 0 34 34"><path d="M23 1L8 17l15 16" /></svg>
        </ToolButton>
        <ToolButton $muted>
          <svg width="34" height="34" viewBox="0 0 34 34"><path d="M11 1l15 16-15 16" /></svg>
        </ToolButton>
        <ToolButton>
          <svg width="34" height="34" viewBox="0 0 34 34"><path d="M2 16V2h14M2 2l13 13M18 32h14V18M32 32L20 20" /></svg>
        </ToolButton>
      </ChartTools>
    </ChartWrap>

    <IndicatorBar $h={62} $pad={8}>
      <Chip $w={151} $ml={1}>
        <Fit width={107} size={35}>成交量</Fit>
        <Triangle $w={15} $h={11} $ml={13} />
      </Chip>
      <BarTexts>
        <Fit width={98} size={38} ml={3}>12.53万↓</Fit>
        <Fit width={146} size={38} color={YELLOW} ml={5}>MA1:41.41万↓</Fit>
        <Fit width={158} size={38} color={PURPLE} ml={4}>MA2:41.80万↓</Fit>
        <Fit width={161} size={38} color={CANDLE_GREEN} ml={5}>MA3:44.27万↓</Fit>
        <Fit width={196} size={38} color="#888" ml={6}>虚拟成交量:50.31万</Fit>
      </BarTexts>
      <SideHandle>
        <svg width="18" height="30" viewBox="0 0 18 30">
          <path d="M16 2L3 15l13 13" fill="none" stroke="#fff" strokeWidth="4" />
        </svg>
      </SideHandle>
    </IndicatorBar>

    <ChartWrap>
      <VolumeChart />
    </ChartWrap>

    <IndicatorBar $h={62} $pad={9}>
      <Chip $w={187} $ml={1}>
        <Fit width={142} size={35}>资金趋势</Fit>
        <Triangle $w={15} $h={11} $ml={14} />
      </Chip>
      <BarTexts>
        <Fit width={148} size={40} ml={2}>1.23亿↑</Fit>
        <Fit width={255} size={40} color={YELLOW} ml={13}>MA1:9391万↑</Fit>
        <Fit width={256} size={40} color={PURPLE} ml={13}>MA2:2.07亿↑</Fit>
      </BarTexts>
    </IndicatorBar>

    <ChartWrap>
      <FlowChart />
    </ChartWrap>

    <Axis>
      <AxisTicks />
      <AxisDates>
        <Fit width={171} size={36} color="#666">20250716</Fit>
        <Fit width={172} size={36} color="#666" ml={61}>20250814</Fit>
        <Fit width={172} size={36} color="#666" ml={188}>20250917</Fit>
        <Fit width={172} size={36} color="#666" ml={103}>20251029</Fit>
      </AxisDates>
    </Axis>

    <Banner>
      <svg width="46" height="40" viewBox="0 0 46 40" fill={ORANGE}>
        <path d="M0 12h4v16H0zM9 12L40 2V0h5v40h-5v-3l-11-4v1q-2 4-6 3l-6-2q-2-1-1-5l-7-2z" />
      </svg>
      <Fit width={784} size={39} color={ORANGE} ml={53}>本周ETF实盘牛人来袭！TA们偏爱哪些机会？</Fit>
      <BannerDivider />
      <svg width="34" height="34" viewBox="0 0 34 34">
        <path d="M2 2l30 30M32 2L2 32" stroke={ORANGE} strokeWidth="3" />
      </svg>
    </Banner>
    <Spacer />

    <BottomNav>
      <IndexBox>
        <Triangle $w={21} $h={8} $up $ml={114} $color="#777" />
        <Fit width={253} size={64} weight={600} color={RED}>3994.04</Fit>
        <IndexRow>
          <Fit width={113} size={55} color="#666" ml={6}>上证</Fit>
          <IndexChange>
            <Fit width={123} size={44} color={RED} ml={21}>0.15%</Fit>
          </IndexChange>
        </IndexRow>
      </IndexBox>
      <NavItem>
        <svg width="66" height="60" viewBox="0 0 66 60">
          <path d="M19 5.500A27 27 0 0 1 56 42l6-3M47 53A27 27 0 0 1 10 17l-7 3M10 17v-3M56 42v4" />
          <path d="M24 16l9 12 9-12M33 28v18M22 30h22M22 38h22" strokeWidth="2.500" />
        </svg>
        <Fit width={110} size={56} color="#666">交易</Fit>
      </NavItem>
      <NavItem>
        <svg width="58" height="60" viewBox="0 0 58 60">
          <path d="M37 4H8q-6 0-6 6v42q0 5 6 5h42q5 0 5-5V21" />
          <path d="M20 39L44 11l5 3-23 23zM47 8l4-5 4 4-3 5z" fill="#666" strokeWidth="1.500" />
        </svg>
        <Fit width={112} size={56} color="#666">发帖</Fit>
      </NavItem>
      <NavItem>
        <svg width="56" height="60" viewBox="0 0 56 60">
          <rect x="3" y="5" width="22" height="22" rx="3" />
          <rect x="3" y="33" width="22" height="22" rx="3" />
          <rect x="31" y="33" width="22" height="22" rx="3" />
          <path d="M42 4l11 12.500L42 29 31 16.500z" strokeLinejoin="round" />
        </svg>
        <Fit width={114} size={56} color="#666">功能</Fit>
      </NavItem>
      <NavItem>
        <svg width="60" height="60" viewBox="0 0 60 60">
          <circle cx="30" cy="30" r="27" />
          <path d="M16 30h5M27.500 30h5M39 30h5" strokeWidth="5" />
        </svg>
        <Fit width={170} size={56} color="#666">设自选</Fit>
      </NavItem>
    </BottomNav>
    <HomeIndicator />
  </Page>
);

export default App;
